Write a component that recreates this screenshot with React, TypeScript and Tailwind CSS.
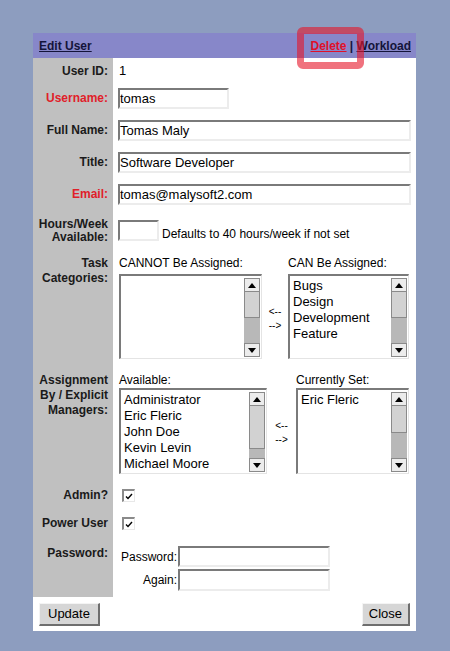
import type { ReactNode } from 'react';

const inputCls =
  'block h-[21px] border-t-2 border-l-2 border-t-[#7a7a7a] border-l-[#7a7a7a] border-r-2 border-b-2 border-r-[#ececec] border-b-[#ececec] bg-white px-0 text-[13px] leading-[17px] text-black outline-none';

interface RowProps {
  label: ReactNode;
  red?: boolean;
  rowCls: string;
  labelCls: string;
  children: ReactNode;
}

function Row({ label, red, rowCls, labelCls, children }: RowProps) {
  return (
    <div className={`flex ${rowCls}`}>
      <div
        className={`w-[80px] shrink-0 bg-[#c0c0c0] pr-[5px] text-right text-[12px] font-bold ${labelCls} ${
          red ? 'text-[#e0202a]' : 'text-[#1a1a1a]'
        }`}
      >
        {label}
      </div>
      <div className="flex-1 pl-[5px]">{children}</div>
    </div>
  );
}

function Scrollbar({ thumbCls }: { thumbCls: string }) {
  return (
    <div className="mt-[2px] mb-[1px] mr-[1px] flex w-[16px] shrink-0 flex-col bg-[#b8b8b8]">
      <div className="flex h-[14px] items-center justify-center border border-[#8a8a8a] bg-[#ececec]">
        <svg width="8" height="5" viewBox="0 0 8 5">
          <path d="M0 5 L4 0 L8 5 Z" fill="#000" />
        </svg>
      </div>
      <div className={`border-x border-b border-[#8a8a8a] bg-[#d2d2d2] ${thumbCls}`} />
      <div className="flex-1" />
      <div className="flex h-[14px] items-center justify-center border border-[#8a8a8a] bg-[#ececec]">
        <svg width="8" height="5" viewBox="0 0 8 5">
          <path d="M0 0 L4 5 L8 0 Z" fill="#000" />
        </svg>
      </div>
    </div>
  );
}

function ListBox({ items, boxCls, thumbCls }: { items: string[]; boxCls: string; thumbCls: string }) {
  return (
    <div
      className={`flex border-t-2 border-l-2 border-t-[#7a7a7a] border-l-[#7a7a7a] border-r border-b border-r-[#e4e4e4] border-b-[#e4e4e4] bg-white ${boxCls}`}
    >
      <div className="flex-1 overflow-hidden pt-[2px] pl-[3px] text-[13px] leading-[16px] text-black">
        {items.map((it) => (
          <div key={it}>{it}</div>
        ))}
      </div>
      <Scrollbar thumbCls={thumbCls} />
    </div>
  );
}

function Arrows({ cls }: { cls: string }) {
  return (
    <div className={`flex flex-col items-center justify-center text-[10px] leading-[14px] text-black ${cls}`}>
      <span>&lt;--</span>
      <span>--&gt;</span>
    </div>
  );
}

function Check() {
  return (
    <div className="flex h-[13px] w-[13px] items-center justify-center border-t-2 border-l-2 border-t-[#8a8a8a] border-l-[#8a8a8a] border-r border-b border-r-[#e8e8e8] border-b-[#e8e8e8] bg-white">
      <svg width="8" height="7" viewBox="0 0 8 7">
        <path d="M1 3.5 L3 5.5 L7 1" fill="none" stroke="#000" strokeWidth="1.4" />
      </svg>
    </div>
  );
}

function Button({ children, cls }: { children: ReactNode; cls: string }) {
  return (
    <button
      className={`h-[23px] border-t border-l border-t-[#f4f4f4] border-l-[#f4f4f4] border-r-2 border-b-2 border-r-[#6e6e6e] border-b-[#6e6e6e] bg-[#d6d6d6] text-[13px] leading-[18px] text-black ${cls}`}
    >
      {children}
    </button>
  );
}

export default function App() {
  return (
    <div className="min-h-[651px] bg-[#8d9dbf] pt-[33px] pl-[33px] font-['Liberation_Sans',Arial,sans-serif]">
      <div className="relative w-[383px] bg-white">
        {/* Header */}
        <div className="flex h-[25px] items-center justify-between bg-[#8787c9] pr-[5px] pl-[6px] text-[12px] font-bold">
          <span className="text-[#14143a] underline">Edit User</span>
          <span className="text-[#14143a]">
            <span className="text-[#e0102a] underline">Delete</span>
            <span> | </span>
            <span className="underline">Workload</span>
          </span>
        </div>

        <Row label="User ID:" rowCls="h-[26px]" labelCls="pt-[6px] leading-[14px]">
          <div className="pt-[5px] pl-[1px] text-[13px] leading-[16px] text-black">1</div>
        </Row>

        <Row label="Username:" red rowCls="h-[32px]" labelCls="pt-[7px] leading-[14px]">
          <div className="pt-[4px]">
            <input className={`${inputCls} w-[111px]`} defaultValue="tomas" />
          </div>
        </Row>

        <Row label="Full Name:" rowCls="h-[32px]" labelCls="pt-[7px] leading-[14px]">
          <div className="pt-[4px]">
            <input className={`${inputCls} w-[293px]`} defaultValue="Tomas Maly" />
          </div>
        </Row>

        <Row label="Title:" rowCls="h-[32px]" labelCls="pt-[7px] leading-[14px]">
          <div className="pt-[4px]">
            <input className={`${inputCls} w-[293px]`} defaultValue="Software Developer" />
          </div>
        </Row>

        <Row label="Email:" red rowCls="h-[32px]" labelCls="pt-[7px] leading-[14px]">
          <div className="pt-[4px]">
            <input className={`${inputCls} w-[293px]`} defaultValue="tomas@malysoft2.com" />
          </div>
        </Row>

        <Row
          label={
            <>
              Hours/Week
              <br />
              Available:
            </>
          }
          rowCls="h-[38px]"
          labelCls="pt-[6px] leading-[13px]"
        >
          <div className="flex items-end pt-[8px]">
            <input className={`${inputCls} w-[41px]`} />
            <span className="ml-[3px] text-[12px] leading-[14px] text-black">Defaults to 40 hours/week if not set</span>
          </div>
        </Row>

        <Row
          label={
            <>
              Task
              <br />
              Categories:
            </>
          }
          rowCls="h-[118px]"
          labelCls="pt-[6px] leading-[15px]"
        >
          <div className="flex pt-[6px] pl-[1px] text-[12px] leading-[15px] text-black">
            <div className="w-[143px]">
              <div className="mb-[3px]">CANNOT Be Assigned:</div>
              <ListBox items={[]} boxCls="h-[85px]" thumbCls="flex-1" />
            </div>
            <Arrows cls="mt-[20px] h-[85px] w-[26px]" />
            <div className="w-[121px]">
              <div className="mb-[3px]">CAN Be Assigned:</div>
              <ListBox items={['Bugs', 'Design', 'Development', 'Feature']} boxCls="h-[85px]" thumbCls="flex-1" />
            </div>
          </div>
        </Row>

        <Row
          label={
            <>
              Assignment
              <br />
              By / Explicit
              <br />
              Managers:
            </>
          }
          rowCls="h-[114px]"
          labelCls="pt-[5px] leading-[15px]"
        >
          <div className="flex pt-[5px] pl-[1px] text-[12px] leading-[15px] text-black">
            <div className="w-[148px]">
              <div>Available:</div>
              <ListBox
                items={['Administrator', 'Eric Fleric', 'John Doe', 'Kevin Levin', 'Michael Moore']}
                boxCls="h-[86px]"
                thumbCls="h-[43px]"
              />
            </div>
            <Arrows cls="mt-[17px] h-[86px] w-[29px]" />
            <div className="w-[113px]">
              <div>Currently Set:</div>
              <ListBox items={['Eric Fleric']} boxCls="h-[86px]" thumbCls="flex-1" />
            </div>
          </div>
        </Row>

        <Row label="Admin?" rowCls="h-[27px]" labelCls="pt-[6px] leading-[14px]">
          <div className="pt-[7px] pl-[4px]">
            <Check />
          </div>
        </Row>

        <Row label="Power User" rowCls="h-[29px]" labelCls="pt-[7px] leading-[14px]">
          <div className="pt-[8px] pl-[4px]">
            <Check />
          </div>
        </Row>

        <Row label="Password:" rowCls="h-[59px]" labelCls="pt-[8px] leading-[14px]">
          <div className="grid grid-cols-[60px_152px] gap-y-[2px] pt-[8px] text-[12px] leading-[14px] text-black">
            <span className="self-center pr-[1px] text-right">Password:</span>
            <input type="password" className={`${inputCls} w-[152px]`} />
            <span className="self-center pr-[1px] text-right">Again:</span>
            <input type="password" className={`${inputCls} h-[22px] w-[152px]`} />
          </div>
        </Row>

        {/* Footer */}
        <div className="flex h-[34px] items-start justify-between px-[6px] pt-[6px]">
          <Button cls="px-[8px]">Update</Button>
          <Button cls="px-[6px]">Close</Button>
        </div>

        {/* highlight around Delete */}
        <div className="pointer-events-none absolute left-[264px] top-[-6px] h-[42px] w-[67px] rounded-[6px] border-[7px] border-[rgba(230,20,40,0.6)]" />
      </div>
    </div>
  );
}
